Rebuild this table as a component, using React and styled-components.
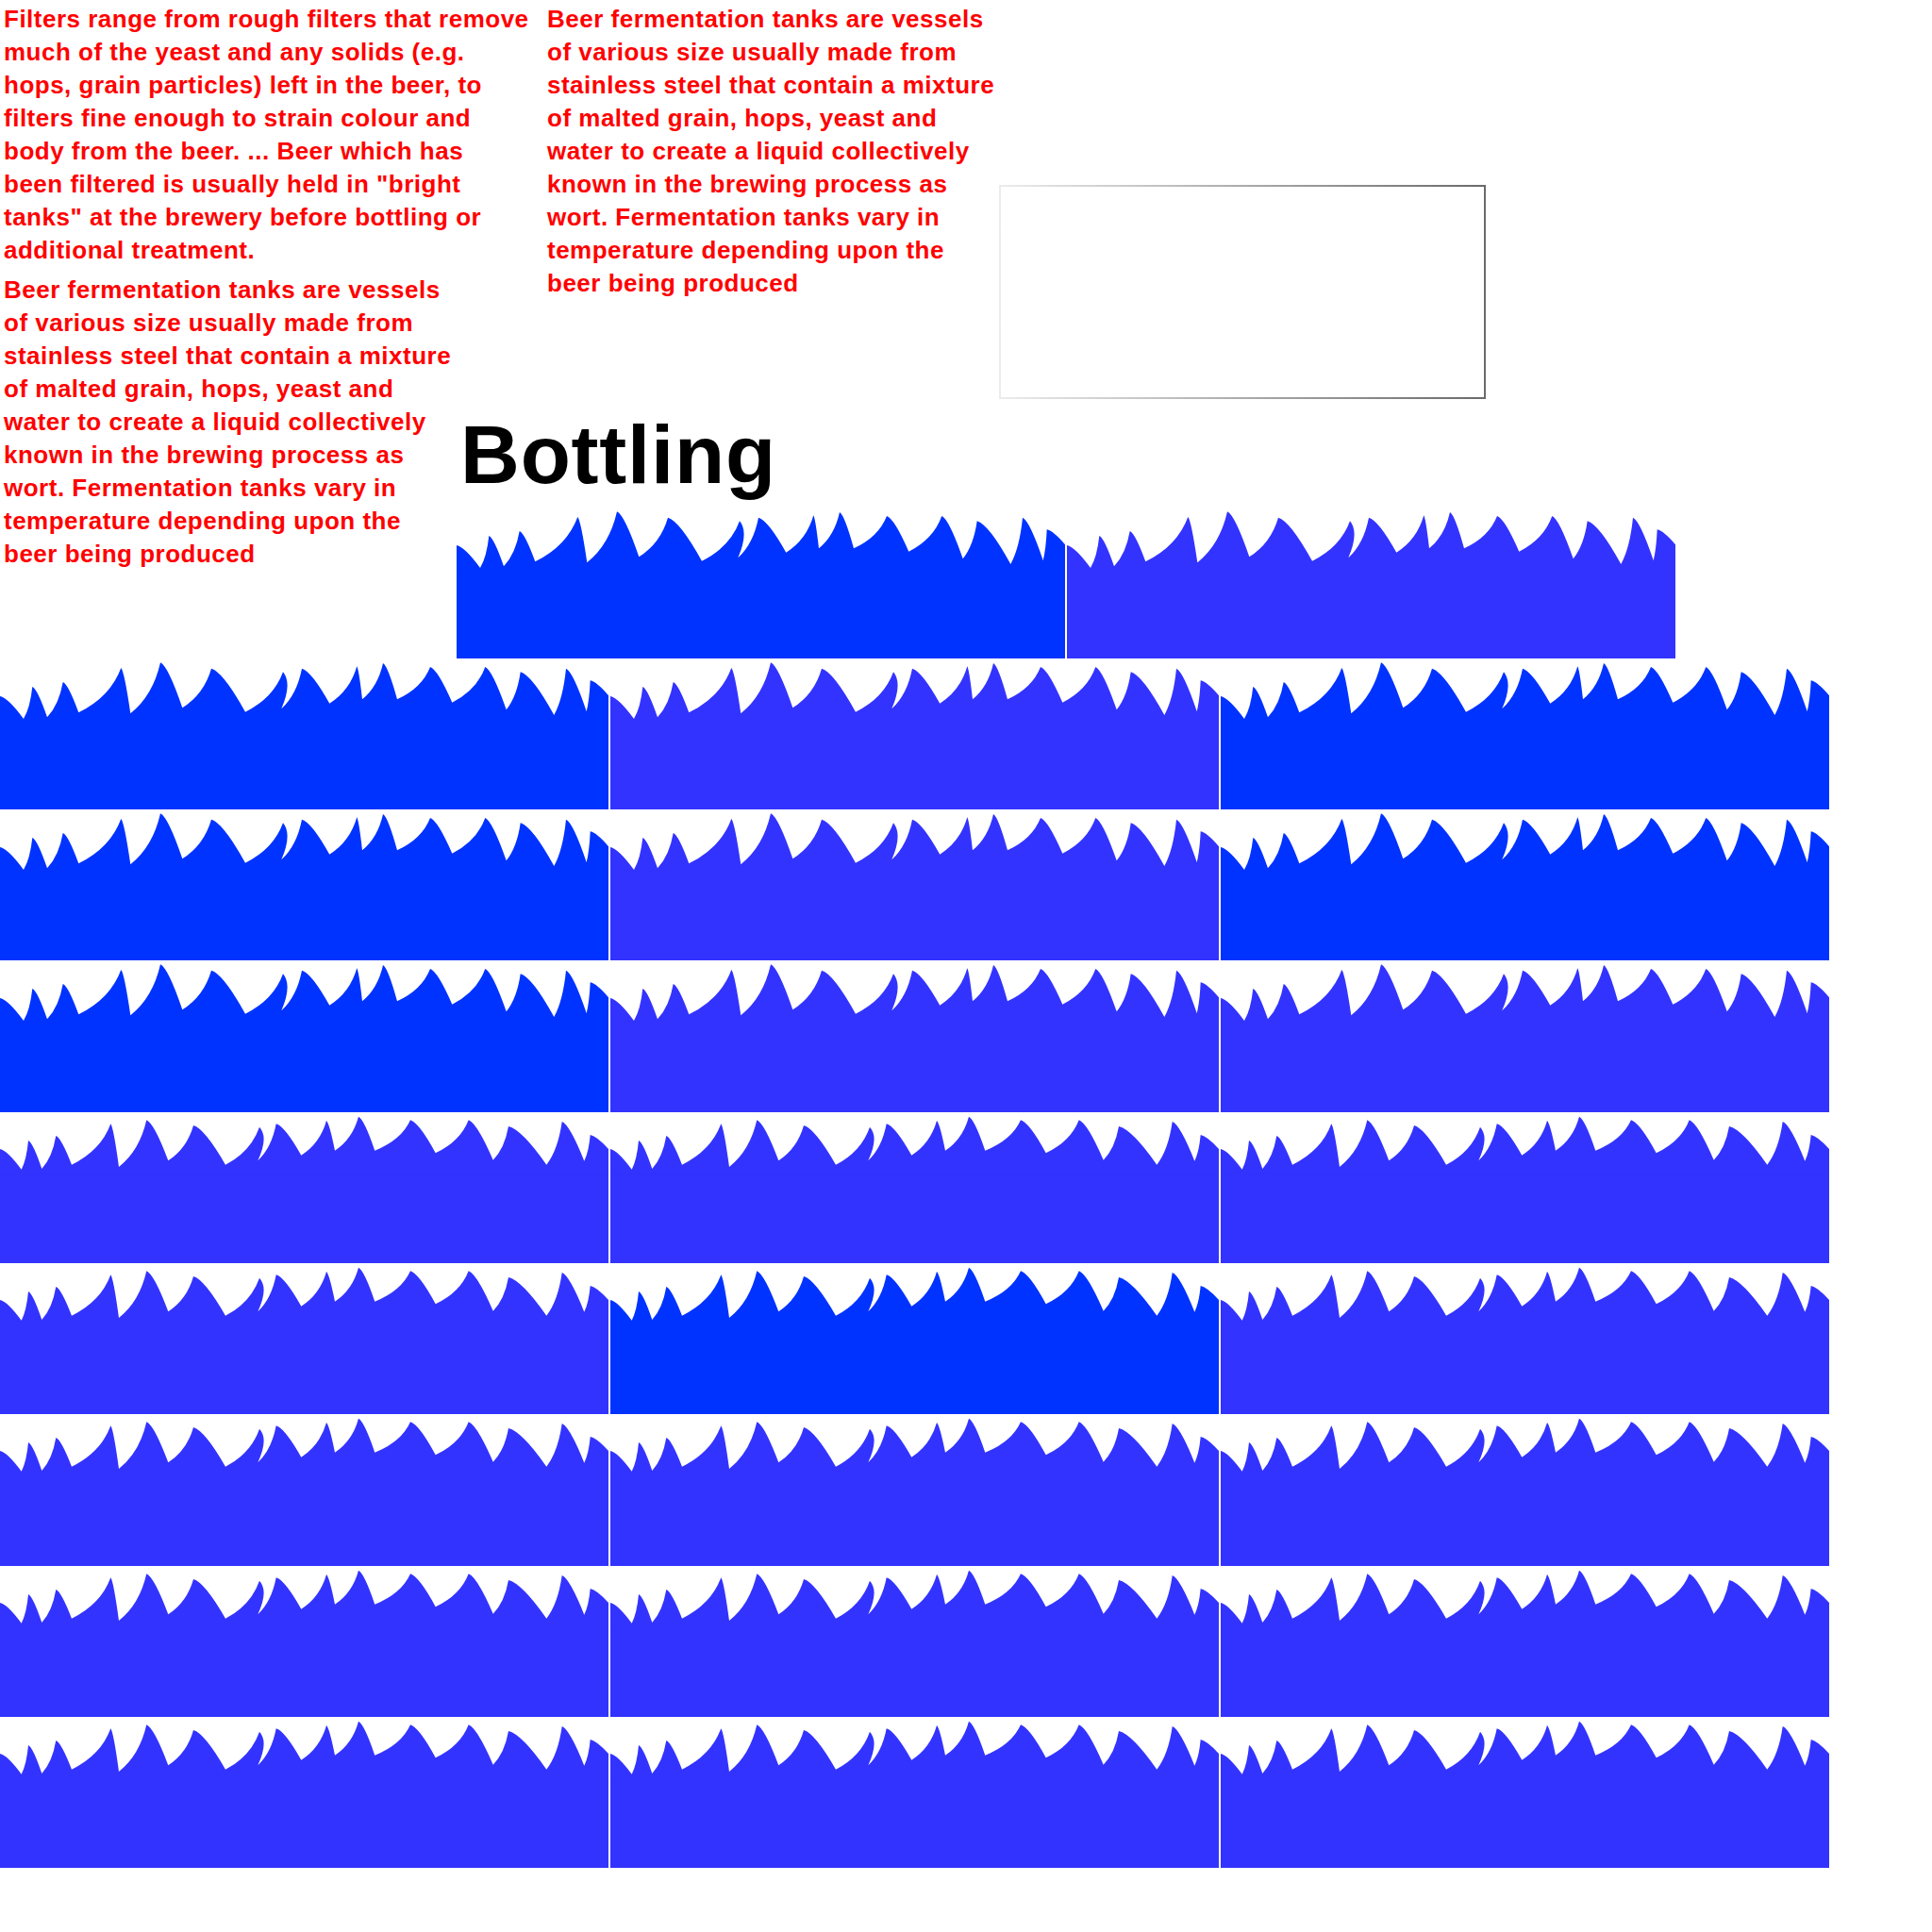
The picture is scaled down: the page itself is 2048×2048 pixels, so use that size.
import React from 'react';
import styled, { createGlobalStyle } from 'styled-components';

const GlobalStyle = createGlobalStyle`
  html, body {
    margin: 0;
    padding: 0;
    background: #fff;
  }
  body {
    font-family: "Liberation Sans", Arial, sans-serif;
  }
`;

const DARK = '#0033ff';
const LIGHT = '#3333ff';

// wave outlines, [x, y] in tile coordinates (tile is 645 wide)
const WAVES = {
  a: {
    left: 38,
    right: 37.3,
    points: [
      [25, 62], [34.3, 28], [50, 60.3], [66.7, 23], [83.3, 55.3], [128.3, 8],
      [138.3, 56.3], [170, 2.3], [193.3, 50.3], [224, 8.7], [260, 54.7], [300, 12.3],
      [298.3, 51.3], [320, 8.7], [349.3, 45.7], [378.3, 6.3], [384, 41.3], [406, 3],
      [421, 41.3], [456, 7], [479.3, 44.7], [514.3, 7], [536.7, 52.3], [551.7, 12.3],
      [587.3, 58], [600, 8.7], [621.7, 54], [625.7, 21.3],
    ],
  },
  b: {
    left: 37,
    right: 37,
    points: [
      [22.7, 58.7], [30, 28], [44.3, 58], [59.3, 23], [76, 53.7], [117.3, 10.3],
      [126, 56], [155.3, 6.3], [178.3, 49.3], [205, 12], [239, 53.7], [275, 13.7],
      [273.3, 49.3], [292.7, 10.3], [319.3, 43.7], [346, 7], [355, 38.7], [380, 2.7],
      [397.3, 38.7], [435, 6.3], [461.7, 41.3], [496.7, 6.3], [522.7, 48.7], [539, 13],
      [579.3, 53.7], [595.7, 8], [619.3, 49.7], [625.7, 22],
    ],
  },
};

const TILE_W = 645;
const WAVE_H = 64;

const buildWave = ({ left, right, points }) => {
  let d = `M0 ${WAVE_H} L0 ${left}`;
  let prev = [0, left];
  [...points, [TILE_W, right]].forEach(([x, y]) => {
    const [px, py] = prev;
    const dx = x - px;
    const dy = y - py;
    let cx;
    let cy;
    if (dy > 0) {
      if (dx < 4) {
        cx = px + 10;
        cy = py + dy * 0.3;
      } else {
        cx = px + dx * 0.35;
        cy = py + dy * 0.08;
      }
    } else {
      cx = px + dx * 0.75;
      cy = py + dy * 0.35;
    }
    d += ` Q${cx.toFixed(1)} ${cy.toFixed(1)} ${x} ${y}`;
    prev = [x, y];
  });
  return `${d} L${TILE_W} ${WAVE_H} Z`;
};

const PATHS = { a: buildWave(WAVES.a), b: buildWave(WAVES.b) };

const FILTERS = [
  'Filters range from rough filters that remove',
  'much of the yeast and any solids (e.g.',
  'hops, grain particles) left in the beer, to',
  'filters fine enough to strain colour and',
  'body from the beer. ... Beer which has',
  'been filtered is usually held in "bright',
  'tanks" at the brewery before bottling or',
  'additional treatment.',
];

const TANKS = [
  'Beer fermentation tanks are vessels',
  'of various size usually made from',
  'stainless steel that contain a mixture',
  'of malted grain, hops, yeast and',
  'water to create a liquid collectively',
  'known in the brewing process as',
  'wort. Fermentation tanks vary in',
  'temperature depending upon the',
  'beer being produced',
];

const GRID = [
  [['d', 'a'], ['l', 'a'], ['d', 'a']],
  [['d', 'a'], ['l', 'a'], ['d', 'a']],
  [['d', 'a'], ['l', 'a'], ['l', 'a']],
  [['l', 'b'], ['l', 'b'], ['l', 'b']],
  [['l', 'b'], ['d', 'b'], ['l', 'b']],
  [['l', 'b'], ['l', 'b'], ['l', 'b']],
  [['l', 'b'], ['l', 'b'], ['l', 'b']],
  [['l', 'b'], ['l', 'b'], ['l', 'b']],
];

const Page = styled.div`
  width: 2048px;
`;

const Intro = styled.section`
  display: grid;
  grid-template-columns: 484px 92px 483px 1fr;
  grid-template-rows: 287px 151px auto;
  grid-template-areas:
    "filters filters tanks frame"
    "tanksb  .       tanks frame"
    "tanksb  bottle  bottle bottle";
  align-items: start;
`;

const Paragraph = styled.p`
  grid-area: ${(p) => p.$area};
  margin: 0;
  padding: 3px 4px 0;
  color: #ff0000;
  font-family: "Liberation Sans", Arial, sans-serif;
  font-weight: 700;
  font-size: 26px;
  line-height: 35px;
  letter-spacing: 0.5px;
  white-space: nowrap;
`;

const Frame = styled.div`
  grid-area: frame;
  box-sizing: border-box;
  width: 516px;
  height: 227px;
  margin-top: 196px;
  border: 2px solid;
  border-image: linear-gradient(to right, #ececec, #6a6a6a) 1;
  background: #fff;
`;

const Bottling = styled.div`
  grid-area: bottle;
  display: flex;
  flex-direction: column;
`;

const Heading = styled.h1`
  margin: 0 0 14.5px;
  padding-left: 4px;
  color: #000;
  font-family: "Liberation Sans", Arial, sans-serif;
  font-weight: 700;
  font-size: 87px;
  line-height: 1;
  letter-spacing: 0.8px;
`;

const TileRow = styled.div`
  display: flex;
  gap: 2px;
`;

const TileGrid = styled.div`
  display: grid;
  grid-template-columns: repeat(3, ${TILE_W}px);
  column-gap: 2px;
  row-gap: 2px;
  margin-top: 2px;
`;

const TileBox = styled.div`
  display: flex;
  flex-direction: column;
  width: ${TILE_W}px;
  height: 158.3px;
  color: ${(p) => (p.$tone === 'd' ? DARK : LIGHT)};
`;

const Wave = styled.svg`
  display: block;
  flex: none;
  margin-bottom: -1px;
`;

const Fill = styled.div`
  flex: 1;
  background: currentColor;
`;

const Lines = ({ lines }) =>
  lines.map((line, i) => (
    <React.Fragment key={i}>
      {line}
      {i < lines.length - 1 && <br />}
    </React.Fragment>
  ));

const Tile = ({ tone, wave }) => (
  <TileBox $tone={tone}>
    <Wave width={TILE_W} height={WAVE_H + 1} viewBox={`0 0 ${TILE_W} ${WAVE_H + 1}`}>
      <path d={PATHS[wave]} fill="currentColor" />
      <rect x="0" y={WAVE_H - 0.5} width={TILE_W} height="1.5" fill="currentColor" />
    </Wave>
    <Fill />
  </TileBox>
);

export default function App() {
  return (
    <Page>
      <GlobalStyle />
      <Intro>
        <Paragraph $area="filters">
          <Lines lines={FILTERS} />
        </Paragraph>
        <Paragraph $area="tanks">
          <Lines lines={TANKS} />
        </Paragraph>
        <Frame />
        <Paragraph $area="tanksb">
          <Lines lines={TANKS} />
        </Paragraph>
        <Bottling>
          <Heading>Bottling</Heading>
          <TileRow>
            <Tile tone="d" wave="a" />
            <Tile tone="l" wave="a" />
          </TileRow>
        </Bottling>
      </Intro>
      <TileGrid>
        {GRID.flat().map(([tone, wave], i) => (
          <Tile key={i} tone={tone} wave={wave} />
        ))}
      </TileGrid>
    </Page>
  );
}
